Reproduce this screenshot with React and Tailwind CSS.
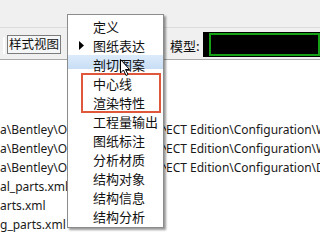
import React from "react";

const items = ["定义", "图纸表达", "剖切图案", "中心线", "渲染特性", "工程量输出", "图纸标注", "分析材质", "结构对象", "结构信息", "结构分析"];

const rows = [
  ["a\\Bentley\\OpenBuildings CONN", "ECT Edition\\Configuration\\WorkSpaces\\"],
  ["a\\Bentley\\OpenBuildings CONN", "ECT Edition\\Configuration\\WorkSpaces\\"],
  ["a\\Bentley\\OpenBuildings CONN", "ECT Edition\\Configuration\\Datasets\\"],
  ["al_parts.xml", ""],
  ["arts.xml", ""],
  ["g_parts.xml", ""],
];

export default function App() {
  const cjk = "font-['Noto_Sans_CJK_SC','Noto_Sans',sans-serif]";
  return (
    <div className={`relative w-[320px] h-[240px] overflow-hidden bg-white text-[#1a1a1a] ${cjk}`}>
      <div className="h-[28px] bg-[#f0f0f0] border-b border-[#dcdcdc]" />
      <div className="h-[32px] bg-[#f0f0f0] border-b border-[#a8a8a8] flex items-start">
        <div className="ml-[3px] mt-[9px] w-[2px] h-[17px] border-l border-[#a0a0a0] border-r border-white" />
        <div className="ml-[2px] mt-[7px] h-[19px] w-[54px] border border-[#7c7c7c] bg-[#f4f6f8] flex items-center justify-center text-[12.5px] leading-none text-[#111]">
          样式视图
        </div>
        <div className="ml-[109px] mt-[9px] w-[33px] text-[13px] leading-[17px] text-[#111]">模型:</div>
        <div className="mt-[4px] h-[25px] flex-1 bg-black pl-[6px] py-[1px]">
          <div className="h-full border-2 border-[#16a016] bg-black" />
        </div>
      </div>
      <div className="mt-[60px] font-['Noto_Sans','Open_Sans',sans-serif] text-[12px]">
        {rows.map((r, i) => (
          <div key={i} className="h-[19px] leading-[19px] flex whitespace-nowrap overflow-hidden">
            <div className="w-[166px] shrink-0 overflow-hidden">{r[0]}</div>
            <div className="shrink-0">{r[1]}</div>
          </div>
        ))}
      </div>

      <div className="absolute left-[67px] top-[14px] w-[97px] h-[214px] bg-white border border-[#8c8c8c] pt-[2px] shadow-[2px_2px_2px_rgba(0,0,0,0.4)]">
        {items.map((t, i) => (
          <div key={t} className={`relative h-[19px] flex items-center ${i === 2 ? "bg-[linear-gradient(to_bottom,#dcebfb_0px,#c8def5_14px,transparent_14px)]" : ""}`}>
            {i === 1 && (
              <svg className="absolute left-[11px] top-[5px]" width="5" height="9" viewBox="0 0 5 9">
                <path d="M0 0 L5 4.5 L0 9 Z" fill="#000" />
              </svg>
            )}
            <span className="ml-[25px] text-[13px] leading-none text-[#111]">{t}</span>
          </div>
        ))}
      </div>

      <div className="absolute left-[81px] top-[73px] w-[80px] h-[40px] border-2 border-[#e0583c]" />

      <svg className="absolute left-[120px] top-[59px]" width="11" height="18" viewBox="0 0 11 18">
        <path d="M0.5 0.5 L0.5 14 L3.5 11 L6 16.5 L8 15.5 L5.5 10.5 L9.5 10.5 Z" fill="#fff" stroke="#000" strokeWidth="1" strokeLinejoin="round" />
      </svg>
    </div>
  );
}
